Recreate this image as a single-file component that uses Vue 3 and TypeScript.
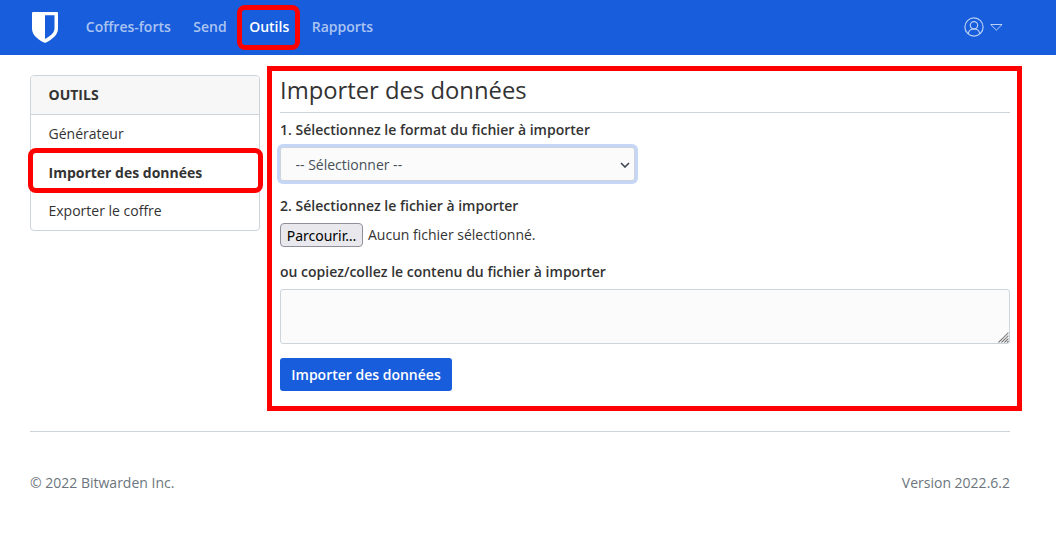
<script setup lang="ts">
import { ref } from 'vue'

interface NavLink {
  label: string
  active?: boolean
}

const navLinks: NavLink[] = [
  { label: 'Coffres-forts' },
  { label: 'Send' },
  { label: 'Outils', active: true },
  { label: 'Rapports' },
]

const tools: NavLink[] = [
  { label: 'Générateur' },
  { label: 'Importer des données', active: true },
  { label: 'Exporter le coffre' },
]

const format = ref('')
const contents = ref('')
</script>

<template>
  <div class="page">
    <header class="navbar">
      <svg class="logo" viewBox="0 0 26 31" width="26" height="31">
        <path
          fill="#fff"
          fill-rule="evenodd"
          d="M1 0h24a1 1 0 0 1 1 1v15.500c0 6-5 10.500-12 14a2.200 2.200 0 0 1-2 0C5 27 0 22.500 0 16.500V1a1 1 0 0 1 1-1ZM13 3.300v23.600c6-3.100 9.500-6.400 9.500-10.700V3.300Z"
        />
      </svg>
      <nav class="links">
        <a
          v-for="link in navLinks"
          :key="link.label"
          class="link"
          :class="{ active: link.active }"
        >{{ link.label }}<span v-if="link.active" class="mark nav-mark"></span></a>
      </nav>
      <div class="account">
        <svg viewBox="0 0 20 20" width="20" height="20" fill="none" stroke="currentColor" stroke-width="1.200">
          <circle cx="10" cy="10" r="9.100" />
          <circle cx="10" cy="8.300" r="3.700" />
          <path d="M4.200 16.700c.5-3 2.800-4.700 5.800-4.700s5.300 1.700 5.800 4.700" />
        </svg>
        <svg class="caret" viewBox="0 0 14 8" width="14" height="8" fill="none" stroke="currentColor" stroke-width="1" stroke-linejoin="round">
          <path d="M.7 1.500h11.400L6.400 7.200Z" />
        </svg>
      </div>
    </header>

    <div class="container">
      <div class="columns">
        <aside class="card">
          <div class="card-header">OUTILS</div>
          <a
            v-for="tool in tools"
            :key="tool.label"
            class="item"
            :class="{ active: tool.active }"
          >{{ tool.label }}<span v-if="tool.active" class="mark item-mark"></span></a>
        </aside>

        <main class="content">
          <span class="mark content-mark"></span>
          <h1>Importer des données</h1>
          <label class="label" for="format">1. Sélectionnez le format du fichier à importer</label>
          <div class="select-wrap">
            <select id="format" v-model="format" class="select">
              <option value="">-- Sélectionner --</option>
            </select>
            <svg class="chevron" viewBox="0 0 10 6" width="10" height="6" fill="none" stroke="#3c4650" stroke-width="1.600">
              <path d="M1 1l4 4 4-4" />
            </svg>
          </div>
          <div class="label second">2. Sélectionnez le fichier à importer</div>
          <div class="file">
            <button type="button" class="browse">Parcourir…</button>
            <span class="file-name">Aucun fichier sélectionné.</span>
          </div>
          <label class="label third" for="contents">ou copiez/collez le contenu du fichier à importer</label>
          <div class="area-wrap">
            <textarea id="contents" v-model="contents" class="area"></textarea>
            <svg class="grip" viewBox="0 0 11 11" width="11" height="11" stroke="#555" stroke-width="1.050" stroke-dasharray="1.100 .3">
              <path d="M.5 10.500l10-10M3.500 10.500l7-7M6.500 10.500l4-4M9 10.500l1.500-1.500" />
            </svg>
          </div>
          <button type="button" class="submit">Importer des données</button>
        </main>
      </div>

      <footer class="footer">
        <span>© 2022 Bitwarden Inc.</span>
        <span>Version 2022.6.2</span>
      </footer>
    </div>
  </div>
</template>

<style>
body {
  margin: 0;
  background: #fff;
}
</style>

<style scoped>
.page,
.page * {
  box-sizing: border-box;
}
.page {
  width: 1056px;
  height: 536px;
  overflow: hidden;
  font-family: "Open Sans", "Noto Sans", sans-serif;
  font-size: 14px;
  line-height: 21px;
  color: #333;
}
.navbar {
  display: flex;
  align-items: center;
  height: 55px;
  padding: 0 52px 1px 32px;
  background: #175ddc;
}
.logo {
  display: block;
  margin-top: 1px;
}
.links {
  display: flex;
  gap: 22.500px;
  margin-left: 27.800px;
  padding-bottom: 1px;
}
.link {
  position: relative;
  font-weight: 600;
  color: rgba(255, 255, 255, 0.65);
}
.link.active {
  color: #fff;
}
.account {
  display: flex;
  align-items: center;
  gap: 6px;
  margin-left: auto;
  color: rgba(255, 255, 255, 0.7);
}
.mark {
  position: absolute;
  border: 5px solid #f00;
  pointer-events: none;
  z-index: 2;
}
.nav-mark {
  left: -11.800px;
  top: -11px;
  width: 63px;
  height: 45px;
  border-radius: 8px;
}
.container {
  width: 980px;
  margin: 20px 0 0 30px;
}
.columns {
  display: flex;
  align-items: flex-start;
  gap: 20px;
}
.card {
  width: 230px;
  height: 156px;
  border: 1px solid #ced4dc;
  border-radius: 4px;
}
.card-header {
  height: 39px;
  padding: 8px 17.500px;
  border-bottom: 1px solid #ced4dc;
  border-radius: 3px 3px 0 0;
  background: #f7f7f7;
  font-weight: 700;
}
.item {
  display: block;
  position: relative;
  height: 38.500px;
  padding: 8px 17.500px;
}
.item.active {
  font-weight: 700;
}
.item-mark {
  left: -3px;
  top: -5.500px;
  width: 235px;
  height: 45px;
  border-radius: 8px;
}
.content {
  position: relative;
  width: 730px;
}
.content-mark {
  left: -13px;
  top: -9px;
  width: 755px;
  height: 345px;
}
h1 {
  height: 38px;
  margin: 0 0 6px;
  border-bottom: 1px solid #ced4dc;
  font-size: 23.800px;
  font-weight: 400;
  line-height: 30px;
}
.label {
  display: block;
  font-weight: 600;
}
.select-wrap {
  position: relative;
  width: 355px;
  height: 34px;
  margin-top: 7px;
}
.select {
  width: 100%;
  height: 100%;
  padding: 0 14.500px;
  appearance: none;
  border: 1px solid #ced4dc;
  border-radius: 3px;
  outline: none;
  background: #fbfbfb;
  box-shadow: 0 0 0 3px #c5d6f6;
  font: inherit;
  color: #465057;
}
.chevron {
  position: absolute;
  right: 5px;
  top: 15px;
}
.second {
  margin-top: 14px;
}
.file {
  display: flex;
  align-items: center;
  gap: 5px;
  height: 24px;
  margin-top: 7px;
}
.file-name {
  margin-top: -1px;
}
.browse {
  width: 83px;
  height: 24px;
  padding: 0;
  border: 1px solid #8f8f9d;
  border-radius: 4px;
  background: #e9e9ed;
  font: 14px "Noto Sans", sans-serif;
  color: #000;
}
.third {
  margin-top: 14px;
}
.area-wrap {
  position: relative;
  height: 55px;
  margin-top: 7px;
}
.area {
  display: block;
  width: 100%;
  height: 55px;
  resize: none;
  border: 1px solid #ced4dc;
  border-radius: 3px;
  background: #fbfbfb;
  font: inherit;
}
.grip {
  position: absolute;
  right: 1px;
  bottom: 1px;
}
.submit {
  display: block;
  width: 172px;
  height: 33px;
  margin-top: 14px;
  padding: 0;
  border: 0;
  border-radius: 3px;
  background: #175ddc;
  font: inherit;
  font-weight: 600;
  color: #fff;
}
.footer {
  display: flex;
  justify-content: space-between;
  margin-top: 40px;
  padding-top: 40px;
  border-top: 1px solid #ced4dc;
  color: #6c757d;
}
</style>
